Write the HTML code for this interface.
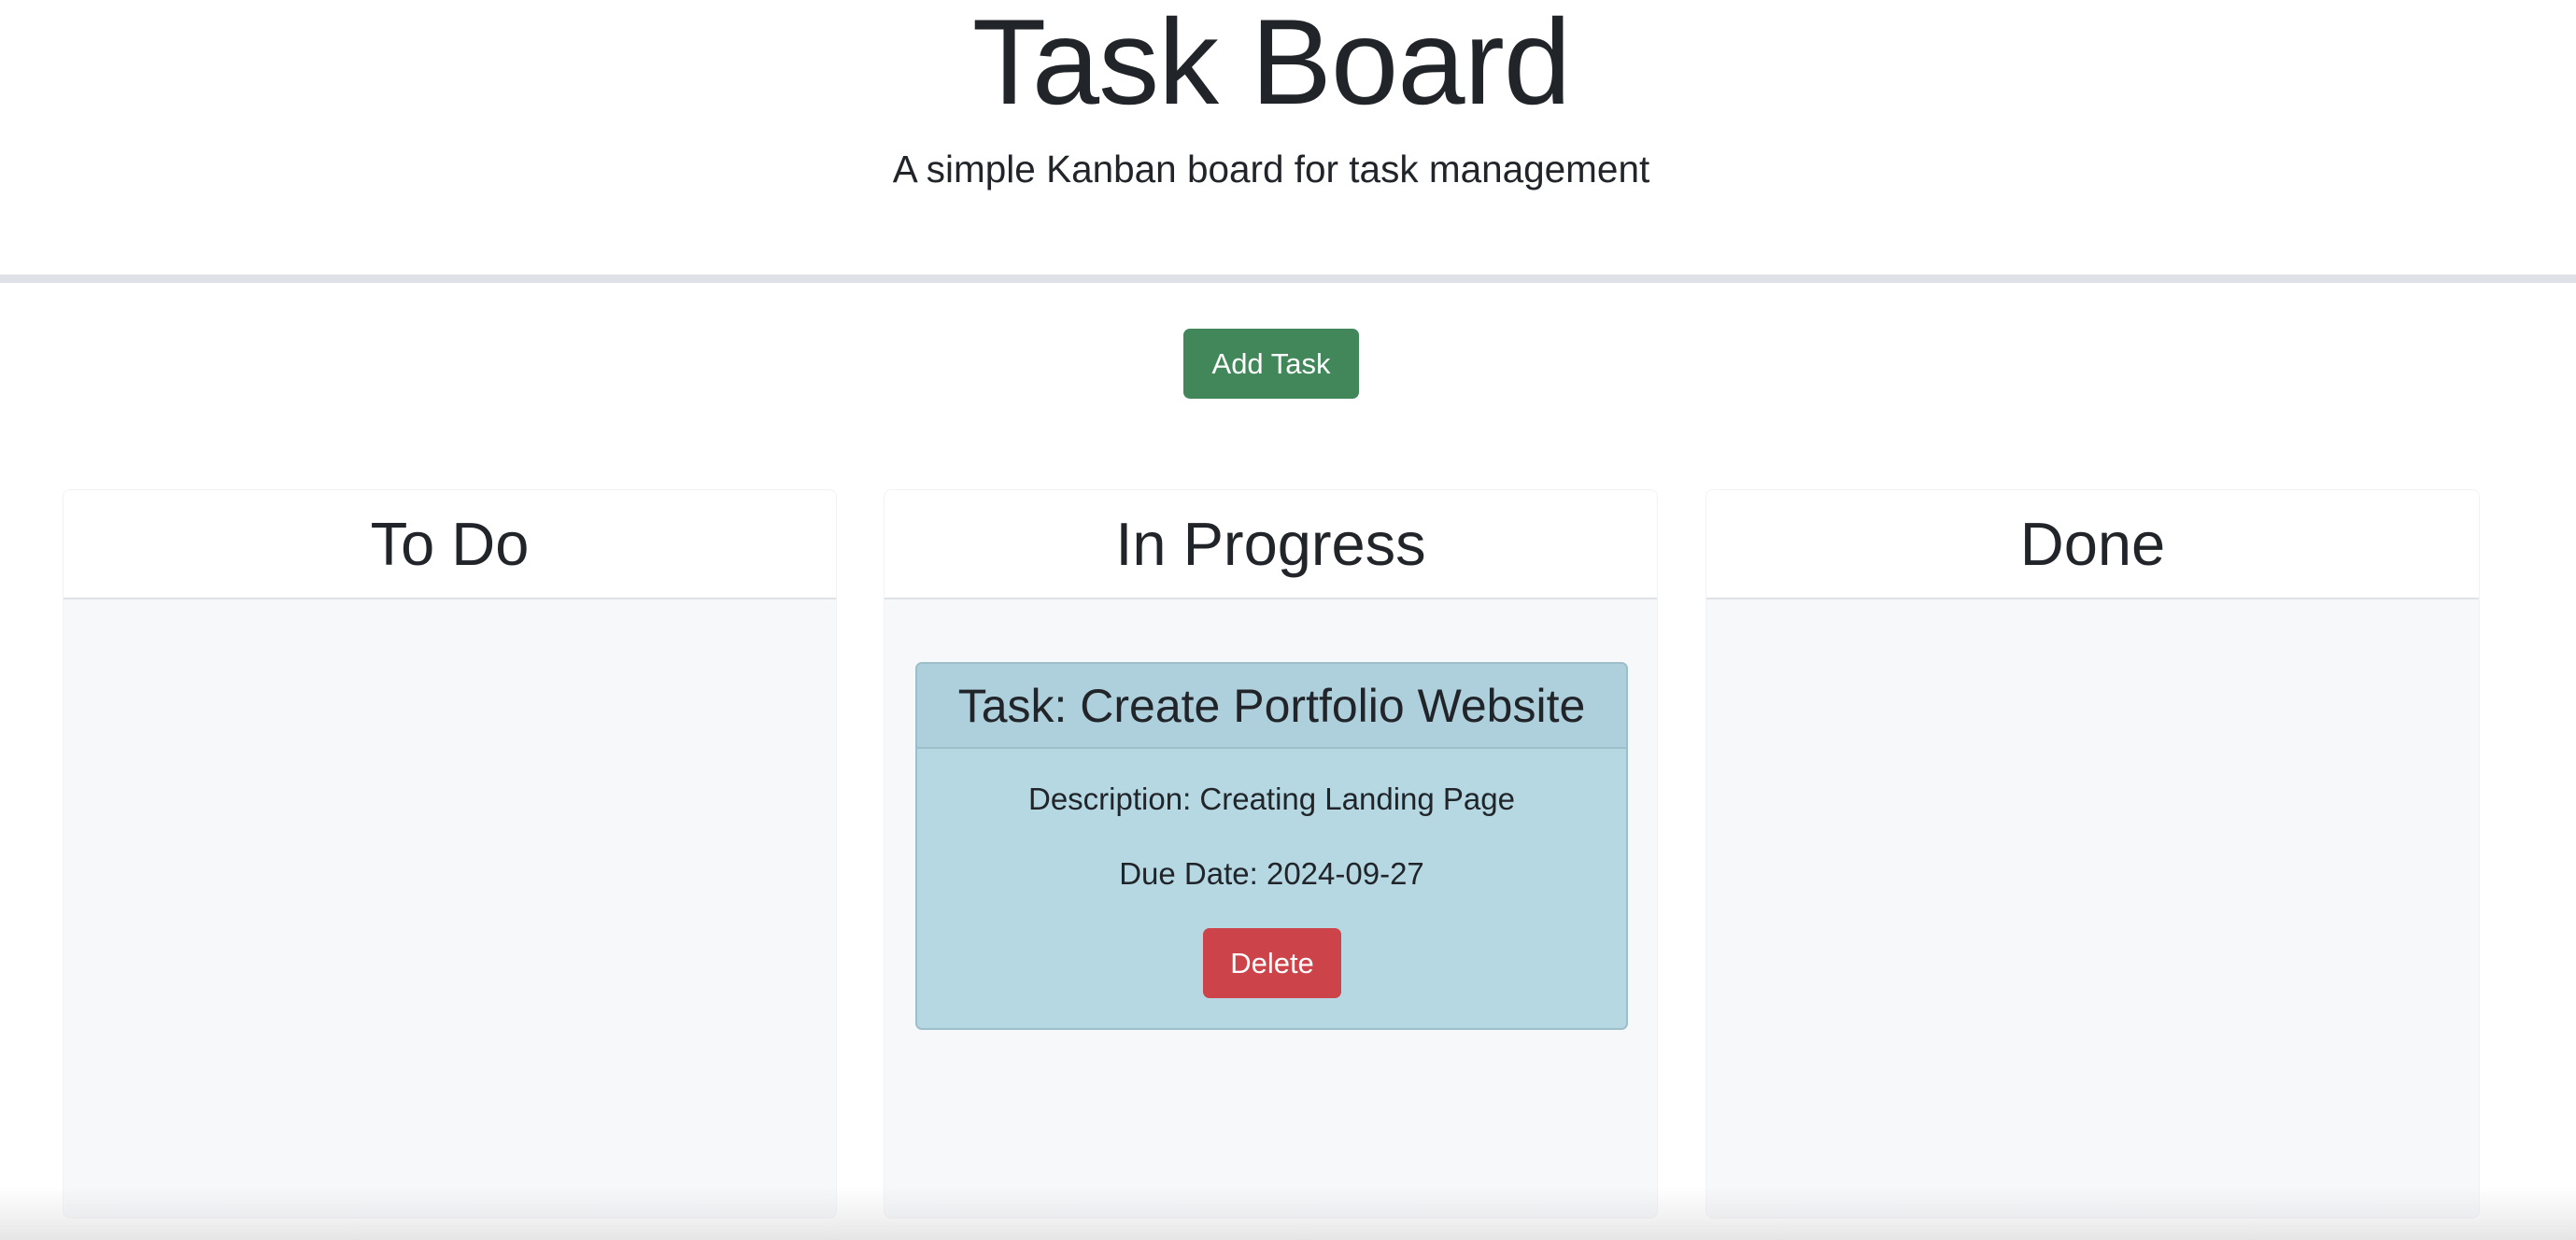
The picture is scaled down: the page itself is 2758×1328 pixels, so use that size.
<!DOCTYPE html>
<html><head><meta charset="utf-8"><style>
*{box-sizing:border-box;margin:0;padding:0}
body{width:2758px;height:1328px;overflow:hidden;background:#fff;font-family:"Liberation Sans",sans-serif;color:#212529;position:relative}
.t{position:absolute;left:0;width:2722px;text-align:center;white-space:nowrap}
h1{font-weight:normal;font-size:130px;top:-9px;letter-spacing:-1px}
.sub{font-size:40.5px;top:158px}
.rule{position:absolute;left:0;top:294px;width:2758px;height:9px;background:#dee2e6}
.btn{position:absolute;color:#fff;border-radius:7px;font-size:31px;display:flex;align-items:center;justify-content:center}
.col{position:absolute;top:524px;width:829px;height:781px;background:#f7f8fa;border-radius:8px;overflow:hidden;border:1px solid #f1f2f4}
.col .h{height:117px;background:#fff;border-bottom:2px solid #dee2e6;font-size:65px;display:flex;align-items:center;justify-content:center}
.card{position:absolute;left:980px;top:709px;width:763px;height:394px;background:#b5d8e3;border:2px solid #9dbfcb;border-radius:7px;overflow:hidden}
.card .h{height:91px;background:#aed0dd;border-bottom:2px solid #9dbfcb;font-size:50px;display:flex;align-items:center;justify-content:center}
.p{position:absolute;left:0;width:100%;text-align:center;font-size:33px}
.fade{position:absolute;left:0;top:1270px;width:2758px;height:58px;background:linear-gradient(rgba(200,200,205,0),rgba(200,200,205,.25) 60%,rgba(190,190,190,.4))}
</style></head><body>
<h1 class="t">Task Board</h1>
<div class="t sub">A simple Kanban board for task management</div>
<div class="rule"></div>
<div class="btn" style="left:1267px;top:352px;width:188px;height:75px;background:#418759">Add Task</div>
<div class="col" style="left:67px"><div class="h">To Do</div></div>
<div class="col" style="left:946px"><div class="h">In Progress</div></div>
<div class="col" style="left:1826px"><div class="h">Done</div></div>
<div class="card"><div class="h">Task: Create Portfolio Website</div>
<div class="p" style="top:126px">Description: Creating Landing Page</div>
<div class="p" style="top:206px">Due Date: 2024-09-27</div>
<div class="btn" style="left:306px;top:283px;width:148px;height:75px;background:#cc434a">Delete</div>
</div>
<div class="fade"></div>
</body></html>
